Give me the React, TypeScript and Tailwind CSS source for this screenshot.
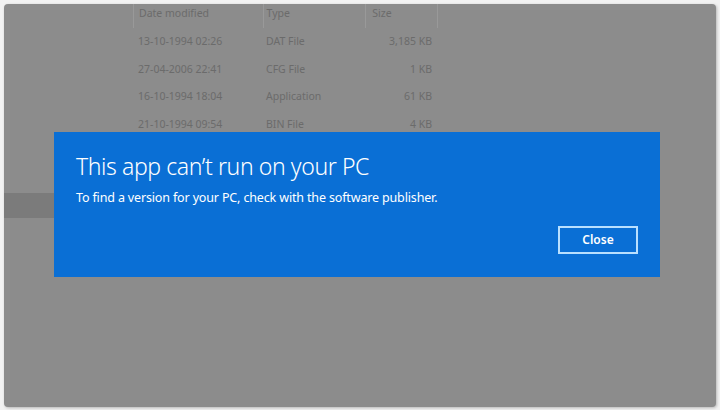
const rows = [
  { date: "13-10-1994 02:26", type: "DAT File", size: "3,185 KB" },
  { date: "27-04-2006 22:41", type: "CFG File", size: "1 KB" },
  { date: "16-10-1994 18:04", type: "Application", size: "61 KB" },
  { date: "21-10-1994 09:54", type: "BIN File", size: "4 KB" },
];

export default function App() {
  return (
    <div className="w-[720px] h-[410px] bg-[#f2f2f2] p-[4px] overflow-hidden font-['Noto_Sans',sans-serif]">
      <div className="relative h-[403px] w-[712px] bg-[#8c8c8c] rounded-[4px] shadow-[1px_1px_3px_rgba(0,0,0,0.25)] overflow-hidden">
        {/* file list behind the dialog */}
        <div className="ml-[129px] w-[305px] text-[10.5px] text-[#6b6b6b]">
          <div className="flex h-[24px] items-start leading-[16px] border-l border-[#999999]">
            <div className="w-[130px] h-full pt-[1px] pl-[5px] border-r border-[#999999]">Date modified</div>
            <div className="w-[103px] h-full pt-[1px] pl-[3px] border-r border-[#999999]">Type</div>
            <div className="w-[72px] h-full pt-[1px] pl-[6px] border-r border-[#999999]">Size</div>
          </div>
          {rows.map((r) => (
            <div key={r.date} className="flex h-[27.7px] items-center">
              <div className="w-[130px] pl-[5px]">{r.date}</div>
              <div className="w-[103px] pl-[3px]">{r.type}</div>
              <div className="w-[72px] pr-[6px] text-right">{r.size}</div>
            </div>
          ))}
        </div>
        <div className="mt-[54px] w-[60px] h-[25px] bg-[#7b7b7b]" />

        {/* dialog */}
        <div className="absolute left-[50px] top-[128px] w-[606px] h-[145px] bg-[#0a6fd5] text-white">
          <div className="pl-[22px] pt-[19px]">
            <h1 className="text-[23px] font-light leading-[30px] tracking-[-0.4px]">
              This app can’t run on your PC
            </h1>
            <p className="mt-[9px] text-[12.5px] leading-[16px] tracking-[-0.15px]">
              To find a version for your PC, check with the software publisher.
            </p>
          </div>
          <div className="flex justify-end pr-[22px] mt-[20px]">
            <button className="w-[80px] h-[28px] border-2 border-[#b9e0ff] text-[12px] font-semibold">
              Close
            </button>
          </div>
        </div>
      </div>
    </div>
  );
}
